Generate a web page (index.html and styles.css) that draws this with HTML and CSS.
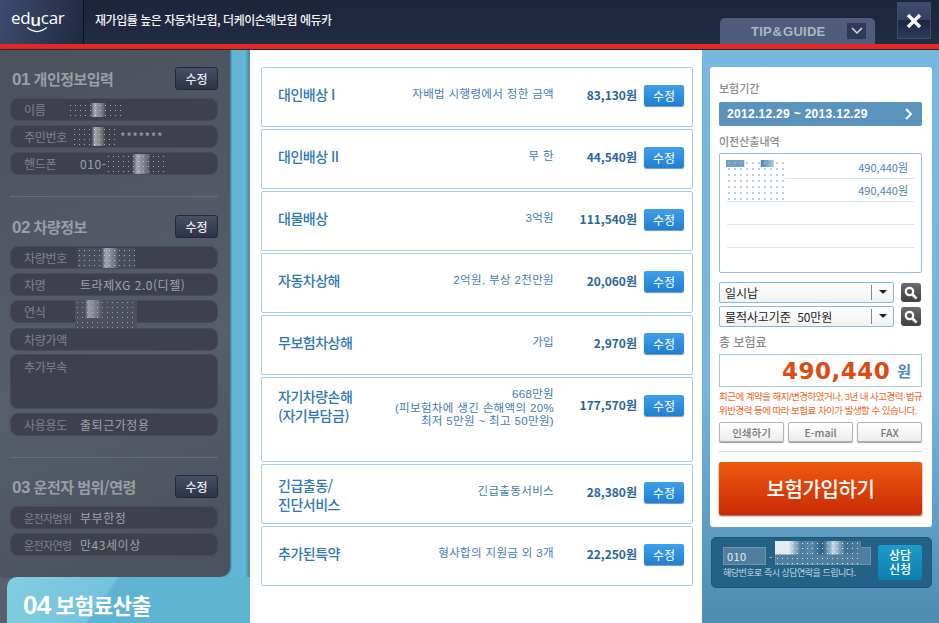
FILE: index.html
```html
<!DOCTYPE html>
<html lang="ko">
<head>
    <meta charset="UTF-8">
    <meta name="viewport" content="width=device-width, initial-scale=1.0">
    <title>에듀카 보험료산출</title>
    <link rel="stylesheet" href="styles.css">
</head>
<body>
    <header class="top-bar">
        <div class="logo">ed<span class="logo-u">u</span>car
            <svg class="logo-smile" width="36" height="10" viewBox="0 0 36 10"><path d="M2 1 Q18 14 34 1" fill="none" stroke="#fff" stroke-width="2"/></svg>
        </div>
        <div class="slogan">재가입률 높은 자동차보험, 더케이손해보험 에듀카</div>
        <div class="tip-tab">
            <span>TIP &amp; GUIDE</span>
            <span class="tip-arrow"><svg width="12" height="8" viewBox="0 0 12 8"><path d="M1 1 L6 6 L11 1" fill="none" stroke="#d5dbe6" stroke-width="1.5"/></svg></span>
        </div>
        <div class="close-btn"><svg width="16" height="16" viewBox="0 0 16 16"><path d="M2 2 L14 14 M14 2 L2 14" stroke="#fff" stroke-width="3.2"/></svg></div>
    </header>

    <main class="content">
        <!-- 왼쪽 입력 요약 -->
        <aside class="left-col">
            <div class="left-panel">
                <section class="info-section sec-one">
                    <div class="info-head"><h2><b>01</b> 개인정보입력</h2><button class="dark-btn">수정</button></div>
                    <div class="field"><label>이름</label><span class="val"><i class="mask mask-name"></i></span></div>
                    <div class="field"><label>주민번호</label><span class="val"><i class="mask mask-id"></i>*******</span></div>
                    <div class="field"><label>핸드폰</label><span class="val">010-<i class="mask mask-tel"></i></span></div>
                </section>
                <section class="info-section sec-two">
                    <div class="info-head"><h2><b>02</b> 차량정보</h2><button class="dark-btn">수정</button></div>
                    <div class="field"><label>차량번호</label><span class="val"><i class="mask mask-car"></i></span></div>
                    <div class="field"><label>차명</label><span class="val">트라제XG 2.0(디젤)</span></div>
                    <div class="field field-mask"><label>연식</label><i class="mask mask-span"></i></div>
                    <div class="field field-gap"><label>차량가액</label></div>
                    <div class="field field-tall"><label>추가부속</label></div>
                    <div class="field"><label>사용용도</label><span class="val">출퇴근가정용</span></div>
                </section>
                <section class="info-section sec-three">
                    <div class="info-head"><h2><b>03</b> 운전자 범위/연령</h2><button class="dark-btn">수정</button></div>
                    <div class="field"><label class="small">운전자범위</label><span class="val">부부한정</span></div>
                    <div class="field"><label class="small">운전자연령</label><span class="val">만43세이상</span></div>
                </section>
            </div>
            <div class="step-tab"><b>04</b> 보험료산출</div>
        </aside>

        <!-- 담보 목록 -->
        <section class="cover-col">
            <div class="cover-row"><div class="cover-name">대인배상 I</div><div class="cover-desc">자배법 시행령에서 정한 금액</div><div class="cover-price">83,130원</div><button class="blue-btn">수정</button></div>
            <div class="cover-row"><div class="cover-name">대인배상 II</div><div class="cover-desc">무 한</div><div class="cover-price">44,540원</div><button class="blue-btn">수정</button></div>
            <div class="cover-row"><div class="cover-name">대물배상</div><div class="cover-desc">3억원</div><div class="cover-price">111,540원</div><button class="blue-btn">수정</button></div>
            <div class="cover-row"><div class="cover-name">자동차상해</div><div class="cover-desc">2억원, 부상 2천만원</div><div class="cover-price">20,060원</div><button class="blue-btn">수정</button></div>
            <div class="cover-row"><div class="cover-name">무보험차상해</div><div class="cover-desc">가입</div><div class="cover-price">2,970원</div><button class="blue-btn">수정</button></div>
            <div class="cover-row cover-row-tall"><div class="cover-name">자기차량손해<br>(자기부담금)</div><div class="cover-desc">668만원<br>(피보험차에 생긴 손해액의 20%<br>최저 5만원 ~ 최고 50만원)</div><div class="cover-price">177,570원</div><button class="blue-btn">수정</button></div>
            <div class="cover-row"><div class="cover-name cover-name-two">긴급출동/<br>진단서비스</div><div class="cover-desc">긴급출동서비스</div><div class="cover-price">28,380원</div><button class="blue-btn">수정</button></div>
            <div class="cover-row"><div class="cover-name">추가된특약</div><div class="cover-desc">형사합의 지원금 외 3개</div><div class="cover-price">22,250원</div><button class="blue-btn">수정</button></div>
        </section>

        <!-- 오른쪽 합계 -->
        <aside class="right-col">
            <div class="sum-card">
                <h3>보험기간</h3>
                <div class="period"><span>2012.12.29 ~ 2013.12.29</span>
                    <svg width="9" height="12" viewBox="0 0 9 12"><path d="M2 1 L7 6 L2 11" fill="none" stroke="#fff" stroke-width="2"/></svg>
                </div>
                <h3 class="h-history">이전산출내역</h3>
                <div class="history">
                    <i class="mask mask-hist"></i>
                    <div class="hist-line">490,440원</div>
                    <div class="hist-line">490,440원</div>
                    <div class="hist-line"></div>
                    <div class="hist-line"></div>
                </div>
                <div class="select-row"><div class="fake-select">일시납<span class="caret"></span></div><button class="search-btn"><svg width="14" height="14" viewBox="0 0 14 14"><circle cx="5.5" cy="5.5" r="3.7" fill="none" stroke="#fff" stroke-width="2.2"/><path d="M8.5 8.5 L12.5 12.5" stroke="#fff" stroke-width="2.6"/></svg></button></div>
                <div class="select-row"><div class="fake-select">물적사고기준 &nbsp;50만원<span class="caret"></span></div><button class="search-btn"><svg width="14" height="14" viewBox="0 0 14 14"><circle cx="5.5" cy="5.5" r="3.7" fill="none" stroke="#fff" stroke-width="2.2"/><path d="M8.5 8.5 L12.5 12.5" stroke="#fff" stroke-width="2.6"/></svg></button></div>
                <h3 class="h-total">총 보험료</h3>
                <div class="total"><span class="total-num">490,440</span><span class="total-unit">원</span></div>
                <p class="notice">최근에 계약을 해지/변경하였거나, 3년 내 사고경력·법규<br>위반경력 등에 따라 보험료 차이가 발생할 수 있습니다.</p>
                <div class="tool-row"><button>인쇄하기</button><button>E-mail</button><button>FAX</button></div>
                <button class="join-btn">보험가입하기</button>
            </div>
            <div class="consult">
                <div class="consult-left">
                    <div class="consult-inputs"><span class="phone-box">010</span><span class="dash">-</span><span class="phone-box phone-wide"><i class="mask mask-phone"></i></span></div>
                    <div class="consult-note">해당번호로 즉시 상담연락을 드립니다.</div>
                </div>
                <button class="consult-btn">상담<br>신청</button>
            </div>
        </aside>
    </main>
</body>
</html>
```

FILE: styles.css
```css
* {
    box-sizing: border-box;
}
html, body {
    margin: 0;
    padding: 0;
    height: 100%;
    overflow: hidden;
}
body {
    font-family: "Noto Sans CJK KR", "Noto Sans", sans-serif;
    font-size: 12px;
    background-color: #fff;
    display: flex;
    flex-direction: column;
}
button {
    font-family: inherit;
    padding: 0;
    cursor: pointer;
}

/* top bar */
.top-bar {
    height: 50px;
    flex: none;
    display: flex;
    align-items: flex-start;
    background: linear-gradient(#1b2439 0, #212c45 44px, #e02a26 44px, #e02a26 49px, #3a2422 49px);
}
.logo {
    width: 84px;
    height: 44px;
    padding: 6px 0 0 11px;
    border-right: 1px solid #0d1220;
    background: linear-gradient(100deg, #3d4c6c, #1f2a42);
    color: #fff;
    font-family: "Open Sans", sans-serif;
    font-size: 17px;
    line-height: 24px;
    letter-spacing: -0.3px;
    position: relative;
}
.logo-u {
    position: relative;
    top: 2px;
    font-weight: 600;
}
.logo-smile {
    position: absolute;
    left: 26px;
    top: 26px;
    width: 22px;
    height: 8px;
}
.slogan {
    color: #f2f4f8;
    font-size: 12px;
    font-weight: 500;
    letter-spacing: -0.47px;
    line-height: 40px;
    margin-left: 11px;
}
.tip-tab {
    margin-left: auto;
    margin-top: 18px;
    width: 155px;
    height: 26px;
    display: flex;
    align-items: center;
    justify-content: space-between;
    padding: 0 9px 0 31px;
    background: #4f5d7c;
    border-radius: 5px 5px 0 0;
    color: #aeb6c6;
    font-family: "Liberation Sans", sans-serif;
    font-size: 13px;
    font-weight: bold;
}
.tip-tab span:first-child {
    word-spacing: -3px;
    letter-spacing: 0.25px;
}
.tip-arrow {
    width: 19px;
    height: 16px;
    background: #2e3a58;
    display: flex;
    align-items: center;
    justify-content: center;
}
.close-btn {
    width: 34px;
    height: 37px;
    margin: 2px 8px 0 22px;
    border: 1px solid #3d4b6c;
    background: linear-gradient(#3d4d70 0, #33415f 50%, #1b2640 50%, #2c3b5e 100%);
    display: flex;
    align-items: center;
    justify-content: center;
}

.content {
    flex: 1;
    display: flex;
    min-height: 0;
}

/* left column */
.left-col {
    width: 250px;
    flex: none;
    background: linear-gradient(90deg, #58606d 0, #58606d 30px, #62b6d5 30px, #62b6d5 245px, #44879d 250px);
    display: flex;
    flex-direction: column;
}
.left-panel {
    width: 230px;
    height: 527px;
    padding: 17px 12px 0 10px;
    background: linear-gradient(160deg, #4c515e, #565d6b 60%, #4a505c);
    border-radius: 0 0 10px 0;
    box-shadow: 1px 0 2px rgba(20, 40, 60, 0.5);
}
.info-section {
    border-bottom: 1px solid #666c79;
}
.sec-one {
    padding-bottom: 17px;
}
.sec-two {
    margin-top: 18px;
    padding-bottom: 17px;
}
.sec-three {
    margin-top: 17px;
    border-bottom: none;
}
.info-head {
    display: flex;
    justify-content: space-between;
    align-items: center;
    height: 23px;
    margin-bottom: 8px;
}
.info-head h2 {
    margin: 0 0 0 2px;
    color: #9b9ea4;
    font-size: 15px;
    font-weight: 700;
    letter-spacing: -0.5px;
}
.info-head h2 b {
    font-size: 17px;
    font-family: "Liberation Sans", sans-serif;
}
.dark-btn {
    width: 43px;
    height: 23px;
    background: linear-gradient(#475064, #2c3346);
    color: #e8eaef;
    border: 1px solid #23293a;
    border-radius: 3px;
    font-size: 12px;
    font-weight: 500;
}
.field {
    position: relative;
    height: 23px;
    display: flex;
    align-items: center;
    margin-bottom: 4px;
    background: #3e414d;
    border: 1px solid #474b58;
    border-radius: 8px;
    color: #7f828b;
    padding-left: 13px;
}
.field label {
    width: 57px;
    flex: none;
    letter-spacing: -0.3px;
    font-size: 12px;
}
.field label.small {
    font-size: 11px;
    letter-spacing: -0.6px;
}
.val {
    margin-left: -1px;
    color: #9ea1a9;
    font-size: 12px;
    letter-spacing: 0.55px;
    white-space: nowrap;
    display: flex;
    align-items: center;
}
.field-gap {
    margin-top: 5px;
    margin-bottom: 3px;
}
.field-tall {
    height: 55px;
    align-items: flex-start;
    padding-top: 3px;
}

/* censored spots */
.mask {
    display: inline-block;
    background-image:
        radial-gradient(circle, rgba(255, 255, 255, 0.55) 0.6px, transparent 0.9px),
        linear-gradient(90deg, transparent 42%, #a5a8ae 50%, #6d7079 66%, transparent 72%);
    background-size: 5px 5px, 100% 100%;
}
.mask-name {
    width: 53px;
    height: 14px;
    margin-left: -12px;
}
.mask-id {
    width: 46px;
    height: 19px;
    margin: 0 2px 0 -8px;
}
.mask-tel {
    width: 62px;
    height: 20px;
}
.mask-car {
    width: 58px;
    height: 20px;
    margin-left: -3px;
    background-color: #494d59;
}
.mask-span {
    position: absolute;
    left: 64px;
    top: -1px;
    width: 62px;
    height: 46px;
    background-color: #4b505c;
    background-image:
        radial-gradient(circle, rgba(255, 255, 255, 0.45) 0.6px, transparent 0.9px),
        linear-gradient(90deg, transparent 16%, #9a9da4 22%, #6d7079 38%, transparent 44%);
    background-size: 5px 5px, 100% 40%;
    background-repeat: repeat, no-repeat;
}
.mask-hist {
    position: absolute;
    left: 6px;
    top: 6px;
    width: 59px;
    height: 40px;
    background-color: #fff;
    background-image:
        radial-gradient(circle, #8fb8d4 0.6px, transparent 0.9px),
        linear-gradient(90deg, #6f9fc4 0, #6f9fc4 30%, transparent 32%, transparent 58%, #4e8ab4 60%, #a8c8de 80%, transparent 82%);
    background-size: 6px 6px, 100% 7px;
    background-repeat: repeat, no-repeat;
}
.mask-phone {
    position: absolute;
    left: -1px;
    top: -7px;
    width: 86px;
    height: 27px;
    background-image:
        radial-gradient(circle, rgba(255, 255, 255, 0.8) 0.6px, transparent 0.9px),
        linear-gradient(90deg, #e4ecf2 0, #e4ecf2 16%, #4c7c9c 30%, #5c8cac 42%, #2a5e84 55%, #c4d8e4 68%, #3f7191 82%, #4f7e9e 100%);
    background-size: 5px 5px, 100% 50%;
    background-repeat: repeat, no-repeat;
}

.step-tab {
    margin-left: 7px;
    flex: 1;
    padding: 13px 0 0 16px;
    background: linear-gradient(125deg, #84cde2 0, #74c3dc 40%, #5fb4d3 41%);
    border-radius: 10px 0 0 0;
    color: #fff;
    font-size: 21.5px;
    font-weight: 700;
    letter-spacing: -0.8px;
    line-height: 30px;
}
.step-tab b {
    font-family: "Liberation Sans", sans-serif;
    font-size: 26px;
}

/* cover list */
.cover-col {
    width: 452px;
    flex: none;
    padding: 17px 9px 0 11px;
    background: #fff;
    display: flex;
    flex-direction: column;
    gap: 2px;
}
.cover-row {
    height: 60px;
    display: flex;
    align-items: flex-start;
    padding-top: 17px;
    border: 1px solid #a9cde9;
    border-radius: 2px;
    color: #3f7cad;
}
.cover-row-tall {
    height: 85px;
    padding-top: 9px;
}
.cover-name {
    width: 128px;
    padding-left: 16px;
    flex: none;
    color: #2e77b4;
    font-size: 14px;
    font-weight: 500;
    line-height: 19px;
    letter-spacing: -0.5px;
}
.cover-name-two {
    margin-top: -6px;
}
.cover-desc {
    flex: 1;
    text-align: right;
    font-family: "Liberation Sans", "Noto Sans CJK KR", sans-serif;
    font-size: 11.5px;
    line-height: 13.5px;
    padding-top: 3px;
    letter-spacing: 0.35px;
    white-space: nowrap;
}
.cover-row-tall .cover-desc {
    margin-top: -2px;
}
.cover-price {
    width: 83px;
    flex: none;
    text-align: right;
    color: #2a6597;
    font-size: 12px;
    font-weight: 700;
    line-height: 19px;
}
.cover-row-tall .cover-price {
    margin-top: 8px;
}
.blue-btn {
    width: 40px;
    height: 21px;
    margin: 0 8px 0 7px;
    background: linear-gradient(#3ea0ea, #1f7fd2);
    color: #fff;
    border: 0;
    border-radius: 2px;
    box-shadow: 0 1px 1px #7d93a5;
    font-size: 12px;
}
.cover-row-tall .blue-btn {
    margin-top: 8px;
}

/* right column */
.right-col {
    flex: 1;
    padding: 17px 8px 0 8px;
    background: linear-gradient(#78b7de 0, #76b4db 60%, #4d8bb3 100%);
}
.sum-card {
    height: 460px;
    padding: 13px 10px 0 9px;
    background: #fff;
    border-radius: 3px;
}
.sum-card h3 {
    margin: 0;
    font-size: 11px;
    font-weight: 500;
    line-height: 16px;
    color: #8a8a8a;
}
.period {
    height: 24px;
    margin-top: 6px;
    padding: 0 9px 0 8px;
    display: flex;
    justify-content: space-between;
    align-items: center;
    background: #5a93bb;
    border-radius: 2px;
    color: #fff;
    font-family: "Liberation Sans", sans-serif;
    font-size: 12px;
    font-weight: bold;
    letter-spacing: 0.3px;
}
.sum-card .h-history {
    margin-top: 7px;
}
.history {
    position: relative;
    height: 120px;
    margin-top: 4px;
    padding: 2px 7px 0;
    border: 1px solid #9bbbd0;
    border-radius: 2px;
}
.hist-line {
    height: 23px;
    line-height: 22px;
    padding-right: 6px;
    text-align: right;
    color: #4a84ae;
    font-size: 11px;
    border-bottom: 1px solid #d3e5f0;
}
.select-row {
    display: flex;
    gap: 7px;
    align-items: center;
    margin-top: 3px;
}
.history + .select-row {
    margin-top: 9px;
}
.fake-select {
    position: relative;
    width: 175px;
    height: 21px;
    padding-left: 5px;
    background: linear-gradient(#fff, #f0f1f2);
    border: 1px solid #93b8cd;
    border-radius: 2px;
    color: #222;
    line-height: 19px;
    font-size: 12px;
    letter-spacing: -0.1px;
}
.caret {
    position: absolute;
    right: 0;
    top: 2px;
    width: 22px;
    height: 15px;
    border-left: 1px solid #7a8a96;
}
.caret::after {
    content: "";
    position: absolute;
    left: 7px;
    top: 5px;
    border: 4px solid transparent;
    border-top: 4px solid #222;
}
.search-btn {
    width: 20px;
    height: 19px;
    background: linear-gradient(#6b6b6b, #404040);
    border: 0;
    border-radius: 3px;
    display: flex;
    align-items: center;
    justify-content: center;
}
.sum-card .h-total {
    margin-top: 7px;
    font-size: 12px;
}
.total {
    height: 33px;
    margin-top: 4px;
    display: flex;
    justify-content: flex-end;
    align-items: center;
    padding-right: 10px;
    border: 1px solid #a7c8e0;
}
.total-num {
    color: #dc4b12;
    font-family: "DejaVu Sans", sans-serif;
    font-size: 23px;
    font-weight: bold;
    letter-spacing: 0.5px;
}
.total-unit {
    margin-left: 7px;
    color: #4f8ab8;
    font-size: 15px;
    font-weight: 700;
}
.notice {
    margin: 3px 0 0;
    color: #f0641e;
    font-family: "Liberation Sans", "Noto Sans CJK KR", sans-serif;
    font-size: 9.5px;
    line-height: 13.5px;
    letter-spacing: -0.52px;
    white-space: nowrap;
}
.tool-row {
    display: flex;
    justify-content: space-between;
    margin-top: 5px;
    padding-bottom: 9px;
    border-bottom: 1px solid #d6d6d6;
}
.tool-row button {
    width: 65px;
    height: 20px;
    background: linear-gradient(#fff, #ececec);
    border: 1px solid #b3b3b3;
    border-radius: 2px;
    box-shadow: 0 1px 1px #999;
    color: #777;
    font-size: 10.5px;
    font-weight: 500;
}
.join-btn {
    width: 203px;
    height: 53px;
    margin-top: 10px;
    background: linear-gradient(#ef5a12, #c92a04);
    color: #fff;
    border: 0;
    border-radius: 2px;
    box-shadow: 0 1px 2px #8a4a30;
    font-size: 20px;
    font-weight: 500;
    letter-spacing: -0.4px;
}
.consult {
    width: 221px;
    height: 51px;
    margin: 10px 0 0 1px;
    padding: 9px 9px 0 11px;
    display: flex;
    justify-content: space-between;
    background: #246187;
    border: 1px solid #1f5578;
    border-radius: 5px;
}
.consult-inputs {
    display: flex;
    align-items: center;
    color: #b9d0de;
}
.phone-box {
    position: relative;
    width: 43px;
    height: 18px;
    padding-left: 3px;
    line-height: 16px;
    background: #4f7e9e;
    border: 1px solid #6b94b0;
    color: #e3edf3;
    font-size: 11px;
    letter-spacing: 0.4px;
}
.dash {
    font-size: 10px;
    margin: 0 3px;
}
.phone-wide {
    width: 96px;
    padding: 0;
}
.consult-note {
    margin-top: 1px;
    color: #c5d9e5;
    font-size: 9px;
    line-height: 14px;
    letter-spacing: -0.5px;
    white-space: nowrap;
}
.consult-btn {
    width: 44px;
    height: 35px;
    margin-top: -2px;
    background: linear-gradient(#1c9cc9, #0c7fae);
    color: #fff;
    border: 0;
    border-radius: 3px;
    font-family: "Liberation Sans", "Noto Sans CJK KR", sans-serif;
    font-size: 12px;
    font-weight: 500;
    line-height: 14px;
}
```
